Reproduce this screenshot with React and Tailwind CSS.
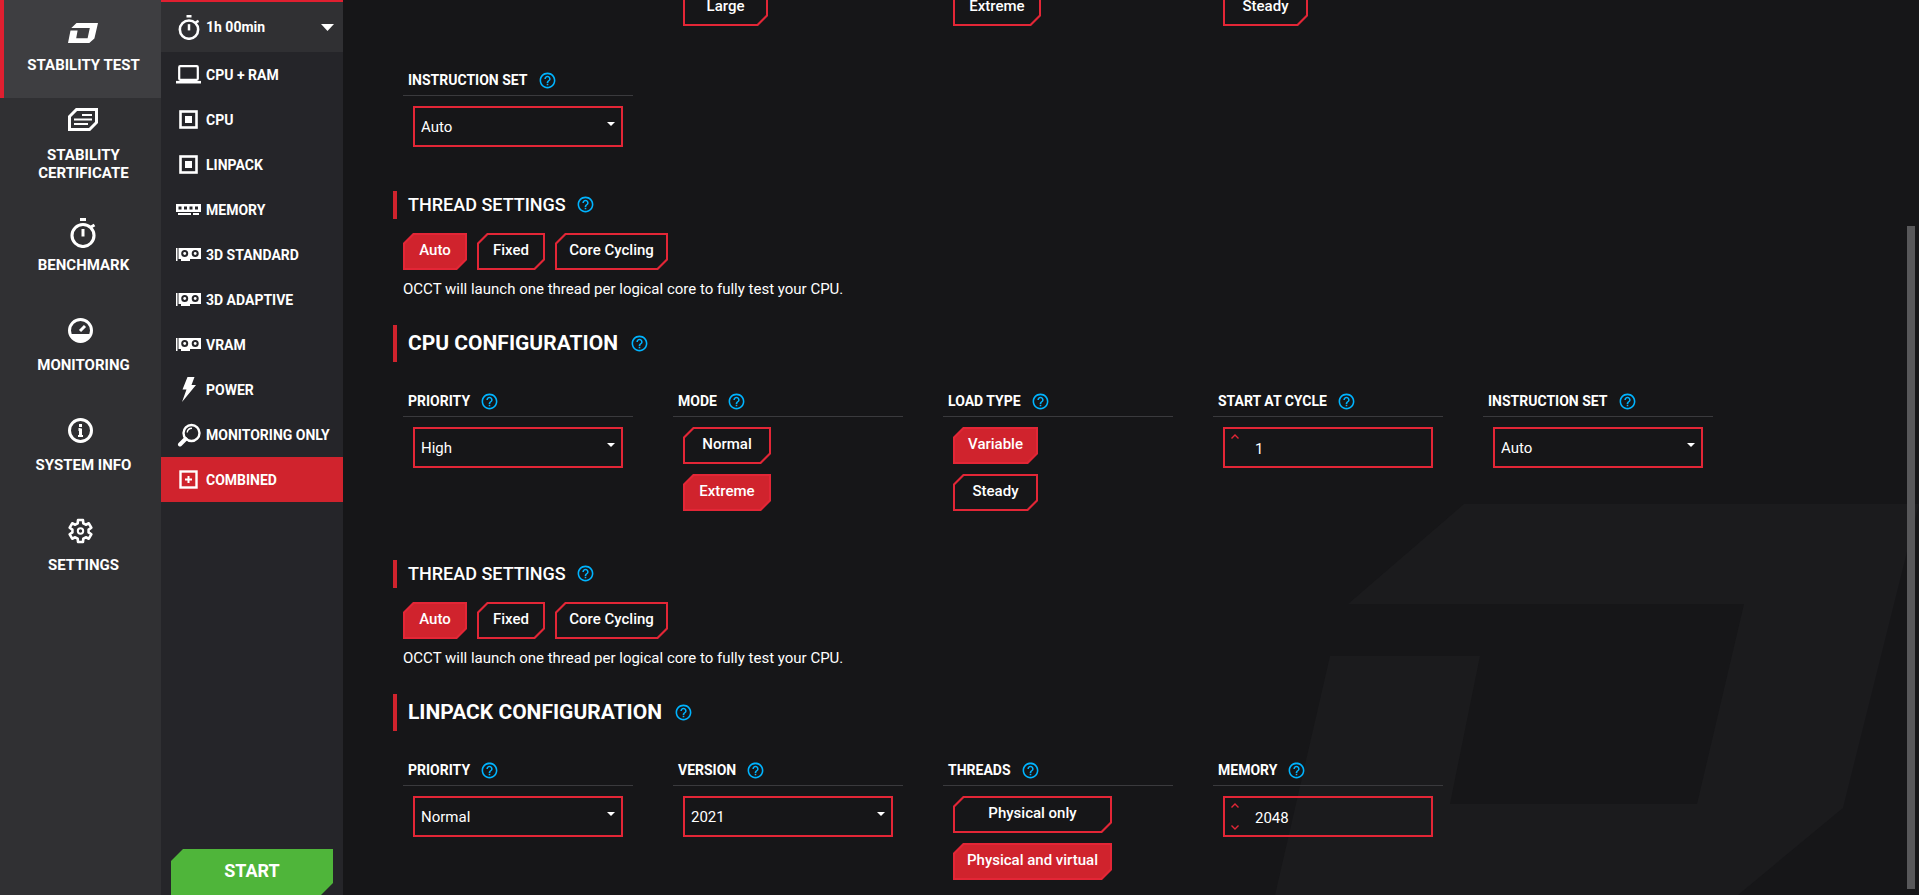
import { useId, useState } from "react";
import { MdHelpOutline } from "react-icons/md";
import clsx from "clsx";

/* ================= ICONS ================= */

const LogoIcon = ({ className }) => (
  <svg viewBox="0 0 30 20" className={className} fill="currentColor" aria-hidden="true">
    <path d="M8.5 0H30L26.4 15.6 21.3 20H0L2.5 7.6H9.6L8.2 15.2H19.6L21.8 5H3.3Z" />
  </svg>
);

const Watermark = () => (
  <svg
    viewBox="0 0 644 391"
    className="pointer-events-none absolute right-0 bottom-0 h-[391px] w-[644px]"
    fill="#1b1b1d"
    aria-hidden="true"
  >
    <path d="M189 0H644L568 304 463 391H0L55 152H205L175 300H422L469 100H73Z" />
  </svg>
);

const CertificateIcon = () => (
  <svg viewBox="0 0 30 23" className="h-[23px] w-[30px]" fill="none" stroke="currentColor" aria-hidden="true">
    <path d="M8.5 1.5H28.5V14.5L21.5 21.5H1.5V8.5Z" strokeWidth="3" />
    <path d="M14 7H24M6 11.5H24M6 16H20" strokeWidth="2.2" />
  </svg>
);

const StopwatchIcon = ({ className }) => (
  <svg viewBox="0 0 26 30" className={className} fill="none" stroke="currentColor" aria-hidden="true">
    <circle cx="13" cy="17.5" r="11" strokeWidth="3.1" />
    <path d="M10 1.5H16M21 9L24.5 7" strokeWidth="3" />
    <path d="M13 11V18.5" strokeWidth="3" />
  </svg>
);

const GaugeIcon = () => (
  <svg viewBox="0 0 25 25" className="size-[25px]" fill="none" stroke="currentColor" aria-hidden="true">
    <circle cx="12.5" cy="12.5" r="11" strokeWidth="3" />
    <path d="M2.5 16H22.5C21 20 17 23 12.5 23S4 20 2.5 16Z" fill="currentColor" stroke="none" />
    <path d="M12 13L17 8" strokeWidth="3" />
  </svg>
);

const InfoIcon = () => (
  <svg viewBox="0 0 25 25" className="size-[25px]" fill="none" stroke="currentColor" aria-hidden="true">
    <circle cx="12.5" cy="12.5" r="11" strokeWidth="3" />
    <path d="M12.5 6V9M10.5 11.5H12.5M12.5 10.5V19" strokeWidth="3" />
    <path d="M10 18H15" strokeWidth="2" />
  </svg>
);

const GearIcon = () => (
  <svg viewBox="0 0 25 26" className="h-[26px] w-[25px]" fill="none" stroke="currentColor" aria-hidden="true">
    <path
      d="M10 2H15L15.3 5.3 17.8 6.7 20.8 5.3 23.3 9.7 20.6 11.6V14.4L23.3 16.3 20.8 20.7 17.8 19.3 15.3 20.7 15 24H10L9.7 20.7 7.2 19.3 4.2 20.7 1.7 16.3 4.4 14.4V11.6L1.7 9.7 4.2 5.3 7.2 6.7 9.7 5.3Z"
      strokeWidth="2.6"
      strokeLinejoin="round"
    />
    <circle cx="12.5" cy="13" r="2.7" strokeWidth="2" />
  </svg>
);

const LaptopIcon = () => (
  <svg viewBox="0 0 25 19" className="h-[19px] w-[25px]" fill="none" stroke="currentColor" aria-hidden="true">
    <rect x="3.2" y="1.2" width="18.6" height="13.6" rx="1" strokeWidth="2.2" />
    <path d="M0 17.2H25" strokeWidth="2.6" />
  </svg>
);

const ChipIcon = () => (
  <svg viewBox="0 0 19 19" className="size-[19px]" fill="none" stroke="currentColor" aria-hidden="true">
    <rect x="1.5" y="1.5" width="16" height="16" strokeWidth="2.6" />
    <rect x="6" y="6" width="7" height="7" fill="currentColor" stroke="none" />
  </svg>
);

const MemoryIcon = () => (
  <svg viewBox="0 0 25 11" className="h-[11px] w-[25px]" fill="currentColor" aria-hidden="true">
    <path
      fillRule="evenodd"
      d="M0 0H25V8H0ZM2.5 2.5V5.5H5.5V2.5ZM8 2.5V5.5H11V2.5ZM13.5 2.5V5.5H16.5V2.5ZM19 2.5V5.5H22V2.5Z"
    />
    <path d="M2 9H15V11H2ZM17 9H23V11H17Z" />
  </svg>
);

const GpuIcon = () => (
  <svg viewBox="0 0 25 13" className="h-[13px] w-[25px]" fill="currentColor" aria-hidden="true">
    <path d="M0 0H1.5V13H0Z" />
    <path
      fillRule="evenodd"
      d="M2.5 0H25V11H14V13H5V11H2.5ZM5.2 5.5A3.5 3.5 0 1 0 12.2 5.5 3.5 3.5 0 1 0 5.2 5.5ZM15.7 5.5A3.5 3.5 0 1 0 22.7 5.5 3.5 3.5 0 1 0 15.7 5.5Z"
    />
    <circle cx="8.7" cy="5.5" r="1.4" />
    <circle cx="19.2" cy="5.5" r="1.4" />
  </svg>
);

const BoltIcon = () => (
  <svg viewBox="0 0 15 25" className="h-[25px] w-[15px]" fill="currentColor" aria-hidden="true">
    <path d="M6.5 0H13.5L10.5 8H15L1 25 5.5 12.5H1.5Z" />
  </svg>
);

const MagnifierIcon = () => (
  <svg viewBox="0 0 24 24" className="size-[24px]" fill="none" stroke="currentColor" aria-hidden="true">
    <circle cx="14.5" cy="10" r="8" strokeWidth="2.4" />
    <path d="M3 21.5L8.5 16" strokeWidth="4" strokeLinecap="round" />
    <path d="M10.2 9.5A4.8 4.8 0 0 1 15 5.2" strokeWidth="1.4" />
  </svg>
);

const CombinedIcon = () => (
  <svg viewBox="0 0 19 19" className="size-[19px]" fill="none" stroke="currentColor" aria-hidden="true">
    <rect x="1.5" y="1.5" width="16" height="16" strokeWidth="2.4" />
    <path d="M9.5 6V13M6 9.5H13" strokeWidth="2" />
  </svg>
);

/* ================= DATA ================= */

const NAV = [
  { label: "STABILITY TEST", icon: <LogoIcon className="h-[20px] w-[30px]" />, box: "h-[98px] pt-[23px] gap-[13px]" },
  { label: "STABILITY CERTIFICATE", icon: <CertificateIcon />, box: "h-[102px] pt-[10px] gap-[15px]" },
  { label: "BENCHMARK", icon: <StopwatchIcon className="mx-[2px] h-[30px] w-[26px]" />, box: "h-[100px] pt-[18px] gap-[8px]" },
  { label: "MONITORING", icon: <GaugeIcon />, box: "h-[100px] pt-[18px] gap-[13px]" },
  { label: "SYSTEM INFO", icon: <InfoIcon />, box: "h-[100px] pt-[18px] gap-[13px]" },
  { label: "SETTINGS", icon: <GearIcon />, box: "h-[100px] pt-[18px] gap-[12px]" },
];

const TESTS = [
  { label: "CPU + RAM", icon: <LaptopIcon /> },
  { label: "CPU", icon: <ChipIcon /> },
  { label: "LINPACK", icon: <ChipIcon /> },
  { label: "MEMORY", icon: <MemoryIcon /> },
  { label: "3D STANDARD", icon: <GpuIcon /> },
  { label: "3D ADAPTIVE", icon: <GpuIcon /> },
  { label: "VRAM", icon: <GpuIcon /> },
  { label: "POWER", icon: <BoltIcon /> },
  { label: "MONITORING ONLY", icon: <MagnifierIcon /> },
  { label: "COMBINED", icon: <CombinedIcon /> },
];

/* ================= CONTROLS ================= */

const Help = () => (
  <button type="button" aria-label="Help" className="text-[#00b4ff]">
    <MdHelpOutline size={19} />
  </button>
);

// button with two cut corners, the outline is the outer shape showing round the inner one
const CutButton = ({ active, onClick, className, children }) => (
  <button
    type="button"
    onClick={onClick}
    className={clsx(
      "h-[37px] bg-[#e32636] p-[2px] text-[15px] font-medium text-white",
      "[clip-path:polygon(10px_0,100%_0,100%_calc(100%-10px),calc(100%-10px)_100%,0_100%,0_10px)]",
      className
    )}
  >
    <span
      className={clsx(
        "flex h-full items-center justify-center px-[13px] pb-[3px] whitespace-nowrap",
        "[clip-path:polygon(9px_0,100%_0,100%_calc(100%-9px),calc(100%-9px)_100%,0_100%,0_9px)]",
        active ? "bg-[#d0232d]" : "bg-[#161618]"
      )}
    >
      {children}
    </span>
  </button>
);

const Field = ({ label, htmlFor, className, children }) => (
  <div className={className}>
    <div className="flex h-[32px] items-center gap-[10px] border-b border-[#3a3a3d] pt-[2px] pl-[5px]">
      <label htmlFor={htmlFor} className="text-[14px] font-bold">
        {label}
      </label>
      <Help />
    </div>
    <div className="pt-[10px] pl-[10px]">{children}</div>
  </div>
);

const SelectField = ({ label, options, className }) => {
  const id = useId();
  return (
    <Field label={label} htmlFor={id} className={className}>
      <div className="relative mb-[5px] w-[210px]">
        <select
          id={id}
          className="h-[41px] w-full appearance-none border-2 border-[#e32636] bg-transparent px-[6px] pt-[2px] text-[15px] outline-none"
        >
          {options.map((option) => (
            <option key={option} className="bg-[#161618]">
              {option}
            </option>
          ))}
        </select>
        <svg
          viewBox="0 0 8 4"
          className="pointer-events-none absolute top-[16px] right-[8px] h-[4px] w-[8px]"
          fill="currentColor"
          aria-hidden="true"
        >
          <path d="M0 0H8L4 4Z" />
        </svg>
      </div>
    </Field>
  );
};

const NumberField = ({ label, initial, min }) => {
  const id = useId();
  const [value, setValue] = useState(initial);
  return (
    <Field label={label} htmlFor={id}>
      <div className="mb-[5px] flex h-[41px] w-[210px] border-2 border-[#e32636]">
        <div className="flex w-[20px] flex-col items-center justify-between py-[5px] text-[#e32636]">
          <button type="button" aria-label={`${label} up`} onClick={() => setValue(value + 1)}>
            <svg viewBox="0 0 8 5" className="h-[5px] w-[8px]" fill="none" stroke="currentColor" strokeWidth="1.4">
              <path d="M0.5 4.5L4 1 7.5 4.5" />
            </svg>
          </button>
          {value > min && (
            <button type="button" aria-label={`${label} down`} onClick={() => setValue(value - 1)}>
              <svg viewBox="0 0 8 5" className="h-[5px] w-[8px]" fill="none" stroke="currentColor" strokeWidth="1.4">
                <path d="M0.5 0.5L4 4 7.5 0.5" />
              </svg>
            </button>
          )}
        </div>
        <input
          id={id}
          type="text"
          inputMode="numeric"
          value={value}
          onChange={(e) => setValue(Number(e.target.value) || min)}
          className="min-w-0 flex-1 bg-transparent pt-[3px] pl-[10px] text-[15px] outline-none"
        />
      </div>
    </Field>
  );
};

const ChoiceField = ({ label, options, initial, width }) => {
  const [selected, setSelected] = useState(initial);
  return (
    <Field label={label}>
      <div className={clsx("mb-[10px] flex flex-col gap-[10px]", width)}>
        {options.map((option) => (
          <CutButton key={option} active={option === selected} onClick={() => setSelected(option)}>
            {option}
          </CutButton>
        ))}
      </div>
    </Field>
  );
};

const FieldGrid = ({ children }) => (
  <div className="grid grid-cols-[repeat(auto-fill,230px)] items-start gap-x-10 gap-y-[28px] pl-[10px]">
    {children}
  </div>
);

const ConfigTitle = ({ children }) => (
  <div className="mb-[23px] flex h-[37px] items-center gap-[12px] border-l-4 border-[#d0232d] pl-[11px]">
    <h2 className="text-[21px] font-bold">{children}</h2>
    <Help />
  </div>
);

const THREAD_MODES = [
  { name: "Auto", width: "w-[64px]" },
  { name: "Fixed", width: "w-[68px]" },
  { name: "Core Cycling", width: "w-[113px]" },
];

const ThreadSettings = () => {
  const [mode, setMode] = useState("Auto");
  return (
    <section className="mt-[39px] mb-[24px]">
      <div className="flex h-[28px] items-center gap-[10px] border-l-4 border-[#d0232d] pb-[2px] pl-[11px]">
        <h3 className="text-[18px] font-medium">THREAD SETTINGS</h3>
        <Help />
      </div>
      <div className="mt-[14px] flex gap-[10px] pl-[10px]">
        {THREAD_MODES.map(({ name, width }) => (
          <CutButton key={name} active={name === mode} onClick={() => setMode(name)} className={width}>
            {name}
          </CutButton>
        ))}
      </div>
      <p className="mt-[8px] pl-[10px] text-[15px] leading-[23px]">
        OCCT will launch one thread per logical core to fully test your CPU.
      </p>
    </section>
  );
};

/* ================= PAGE ================= */

export default function App() {
  const [page, setPage] = useState("STABILITY TEST");
  const [test, setTest] = useState("COMBINED");

  return (
    <div className="flex h-screen overflow-hidden bg-[#161618] font-['Roboto',sans-serif] text-white">
      {/* ================= MAIN MENU ================= */}
      <nav className="w-[161px] shrink-0 bg-[#303033]">
        {NAV.map((item) => (
          <button
            key={item.label}
            type="button"
            onClick={() => setPage(item.label)}
            className={clsx(
              "flex w-full flex-col items-center border-l-4 px-[18px] text-[15px] leading-[18px] font-bold",
              item.box,
              item.label === page ? "border-[#e01f30] bg-[#3e3e41]" : "border-transparent"
            )}
          >
            <span className="w-[30px]">{item.icon}</span>
            <span className="pl-[2px]">{item.label}</span>
          </button>
        ))}
      </nav>

      {/* ================= TEST LIST ================= */}
      <aside className="flex w-[182px] shrink-0 flex-col border-t-2 border-[#e01f30] bg-[#252529]">
        <button type="button" className="flex h-[50px] w-full items-center bg-[#303033] pr-[9px] pl-[15px]">
          <span className="flex w-[25px] justify-center">
            <StopwatchIcon className="h-[25px] w-[22px]" />
          </span>
          <span className="flex-1 pl-[5px] text-left text-[14px] font-bold">1h 00min</span>
          <svg viewBox="0 0 13 7" className="h-[7px] w-[13px]" fill="currentColor" aria-hidden="true">
            <path d="M0 0H13L6.5 7Z" />
          </svg>
        </button>
        {TESTS.map((item) => (
          <button
            key={item.label}
            type="button"
            onClick={() => setTest(item.label)}
            className={clsx(
              "flex h-[45px] w-full items-center gap-[5px] pl-[15px] text-[14px] font-bold whitespace-nowrap",
              item.label === test && "bg-[#d0232d]"
            )}
          >
            <span className="flex w-[25px] justify-center">{item.icon}</span>
            <span className="pt-[2px]">{item.label}</span>
          </button>
        ))}
        <button
          type="button"
          className="mx-[10px] mt-auto h-[46px] bg-[#4fb53a] pb-[3px] text-[18px] font-bold [clip-path:polygon(12px_0,100%_0,100%_calc(100%-12px),calc(100%-12px)_100%,0_100%,0_12px)]"
        >
          START
        </button>
      </aside>

      {/* ================= CONFIGURATION ================= */}
      <main className="relative min-w-0 flex-1">
        <Watermark />
        <div className="relative flex h-full">
          <div className="-mt-[11px] min-w-0 flex-1 pr-5 pl-[50px]">
            <FieldGrid>
              <div className="col-start-2 mb-[10px] ml-[10px] flex">
                <CutButton className="w-[85px]">Large</CutButton>
              </div>
              <div className="ml-[10px] flex">
                <CutButton className="w-[88px]">Extreme</CutButton>
              </div>
              <div className="ml-[10px] flex">
                <CutButton className="w-[85px]">Steady</CutButton>
              </div>
              <SelectField label="INSTRUCTION SET" options={["Auto", "SSE", "AVX", "AVX2"]} className="col-start-1" />
            </FieldGrid>
            <ThreadSettings />

            <ConfigTitle>CPU CONFIGURATION</ConfigTitle>
            <FieldGrid>
              <SelectField label="PRIORITY" options={["High", "Normal", "Low"]} />
              <ChoiceField label="MODE" options={["Normal", "Extreme"]} initial="Extreme" width="w-[88px]" />
              <ChoiceField label="LOAD TYPE" options={["Variable", "Steady"]} initial="Variable" width="w-[85px]" />
              <NumberField label="START AT CYCLE" initial={1} min={1} />
              <SelectField label="INSTRUCTION SET" options={["Auto", "SSE", "AVX", "AVX2"]} />
            </FieldGrid>
            <ThreadSettings />

            <ConfigTitle>LINPACK CONFIGURATION</ConfigTitle>
            <FieldGrid>
              <SelectField label="PRIORITY" options={["Normal", "High", "Low"]} />
              <SelectField label="VERSION" options={["2021", "2019", "2012"]} />
              <ChoiceField
                label="THREADS"
                options={["Physical only", "Physical and virtual"]}
                initial="Physical and virtual"
                width="w-[159px]"
              />
              <NumberField label="MEMORY" initial={2048} min={1} />
            </FieldGrid>
          </div>
          <div className="mt-[226px] mr-1 mb-[6px] w-2 bg-[#58585a]" />
        </div>
      </main>
    </div>
  );
}
